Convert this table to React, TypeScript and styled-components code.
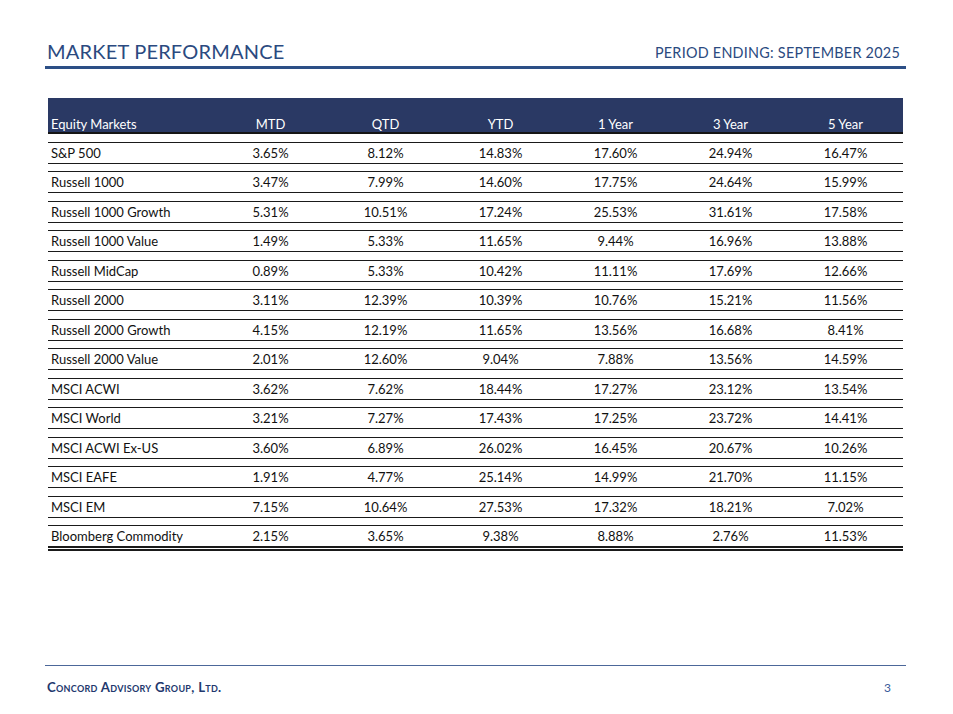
import styled, { createGlobalStyle } from "styled-components";

const GlobalStyle = createGlobalStyle`
  html, body {
    margin: 0;
    padding: 0;
    background: #ffffff;
  }
`;

type Row = { name: string; values: string[] };

const columns = ["MTD", "QTD", "YTD", "1 Year", "3 Year", "5 Year"];

const rows: Row[] = [
  { name: "S&P 500", values: ["3.65%", "8.12%", "14.83%", "17.60%", "24.94%", "16.47%"] },
  { name: "Russell 1000", values: ["3.47%", "7.99%", "14.60%", "17.75%", "24.64%", "15.99%"] },
  { name: "Russell 1000 Growth", values: ["5.31%", "10.51%", "17.24%", "25.53%", "31.61%", "17.58%"] },
  { name: "Russell 1000 Value", values: ["1.49%", "5.33%", "11.65%", "9.44%", "16.96%", "13.88%"] },
  { name: "Russell MidCap", values: ["0.89%", "5.33%", "10.42%", "11.11%", "17.69%", "12.66%"] },
  { name: "Russell 2000", values: ["3.11%", "12.39%", "10.39%", "10.76%", "15.21%", "11.56%"] },
  { name: "Russell 2000 Growth", values: ["4.15%", "12.19%", "11.65%", "13.56%", "16.68%", "8.41%"] },
  { name: "Russell 2000 Value", values: ["2.01%", "12.60%", "9.04%", "7.88%", "13.56%", "14.59%"] },
  { name: "MSCI ACWI", values: ["3.62%", "7.62%", "18.44%", "17.27%", "23.12%", "13.54%"] },
  { name: "MSCI World", values: ["3.21%", "7.27%", "17.43%", "17.25%", "23.72%", "14.41%"] },
  { name: "MSCI ACWI Ex-US", values: ["3.60%", "6.89%", "26.02%", "16.45%", "20.67%", "10.26%"] },
  { name: "MSCI EAFE", values: ["1.91%", "4.77%", "25.14%", "14.99%", "21.70%", "11.15%"] },
  { name: "MSCI EM", values: ["7.15%", "10.64%", "27.53%", "17.32%", "18.21%", "7.02%"] },
  { name: "Bloomberg Commodity", values: ["2.15%", "3.65%", "9.38%", "8.88%", "2.76%", "11.53%"] },
];

const Page = styled.div`
  width: 953px;
  height: 714px;
  box-sizing: border-box;
  padding: 38px 47px 0 45px;
  display: flex;
  flex-direction: column;
  font-family: Lato, "Open Sans", sans-serif;
`;

const TitleBar = styled.div`
  display: flex;
  justify-content: space-between;
  align-items: flex-end;
  padding: 0 6px 4px 2px;
  border-bottom: 3px solid #2c4f86;
`;

const Title = styled.h1`
  margin: 0;
  font-size: 20px;
  font-weight: 400;
  letter-spacing: 0.2px;
  color: #2b4a80;
  line-height: 24px;
  position: relative;
  top: 1px;
`;

const Period = styled.div`
  font-size: 14.4px;
  color: #2b4a80;
  line-height: 18px;
  letter-spacing: 0.25px;
`;

const Table = styled.div`
  margin: 29px 3px 0 3px;
  display: flex;
  flex-direction: column;
`;

const grid = `
  display: grid;
  grid-template-columns: 165px repeat(6, 1fr);
`;

const HeadRow = styled.div`
  ${grid}
  align-items: end;
  height: 36px;
  box-sizing: border-box;
  background: #2a3964;
  border-bottom: 2px solid #151515;
  color: #ffffff;
  font-size: 13px;
  line-height: 16px;
  padding-bottom: 0;
`;

const BodyRow = styled.div<{ $last?: boolean }>`
  ${grid}
  align-items: center;
  height: ${(p) => (p.$last ? "26px" : "22px")};
  box-sizing: border-box;
  margin-top: 7.5px;
  border-top: 1.5px solid #1a1a1a;
  border-bottom: ${(p) => (p.$last ? "5px double #1a1a1a" : "1.5px solid #1a1a1a")};
  color: #111;
  font-size: 13px;
  &:first-of-type {
    margin-top: 8px;
  }
`;

const NameCell = styled.div`
  padding-left: 3px;
  white-space: nowrap;
`;

const ValueCell = styled.div`
  text-align: center;
`;

const Footer = styled.div`
  margin-top: auto;
  margin-bottom: 19px;
  border-top: 1.5px solid #4c6799;
  padding: 13px 15px 0 2px;
  display: flex;
  justify-content: space-between;
  align-items: center;
`;

const Company = styled.div`
  font-weight: 700;
  font-size: 13.2px;
  font-variant: small-caps;
  letter-spacing: 0.3px;
  color: #22386e;
`;

const PageNum = styled.div`
  font-size: 12px;
  color: #3a5a9a;
`;

export default function App() {
  return (
    <>
      <GlobalStyle />
      <Page>
        <TitleBar>
          <Title>MARKET PERFORMANCE</Title>
          <Period>PERIOD ENDING: SEPTEMBER 2025</Period>
        </TitleBar>
        <Table>
          <HeadRow>
            <NameCell>Equity Markets</NameCell>
            {columns.map((c) => (
              <ValueCell key={c}>{c}</ValueCell>
            ))}
          </HeadRow>
          {rows.map((r, i) => (
            <BodyRow key={r.name} $last={i === rows.length - 1}>
              <NameCell>{r.name}</NameCell>
              {r.values.map((v, j) => (
                <ValueCell key={j}>{v}</ValueCell>
              ))}
            </BodyRow>
          ))}
        </Table>
        <Footer>
          <Company>Concord Advisory Group, Ltd.</Company>
          <PageNum>3</PageNum>
        </Footer>
      </Page>
    </>
  );
}
